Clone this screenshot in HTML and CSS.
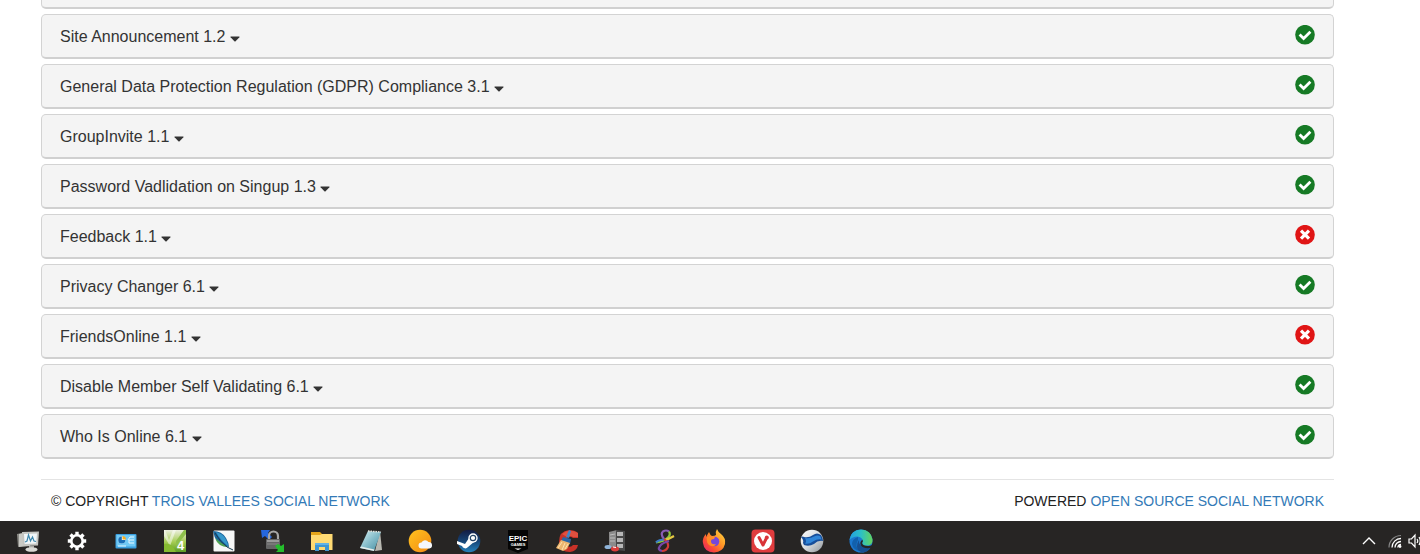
FILE: index.html
```html
<!DOCTYPE html>
<html lang="en">
<head>
    <meta charset="UTF-8">
    <meta name="viewport" content="width=device-width, initial-scale=1.0">
    <title>Components</title>
    <link rel="stylesheet" href="styles.css">
</head>
<body>
    <!-- Shared icons -->
    <svg class="sprite" aria-hidden="true">
        <symbol id="check" viewBox="0 0 20 20">
            <circle cx="10" cy="9.7" r="9.8" fill="#167a25"/>
            <path d="M4.600 9.500l4 4 6.800-6.800" fill="none" stroke="#fff" stroke-width="2.8"/>
        </symbol>
        <symbol id="cross" viewBox="0 0 20 20">
            <circle cx="10" cy="9.7" r="9.8" fill="#e01515"/>
            <path d="M6 5.700l8 8M14 5.700l-8 8" fill="none" stroke="#fff" stroke-width="3.2"/>
        </symbol>
        <symbol id="caret" viewBox="0 0 10 6">
            <path d="M1 .5h8q1 0 .4.8L5.6 5.2q-.6.6-1.2 0L.6 1.3Q0 .5 1 .5z" fill="#333"/>
        </symbol>
    </svg>

    <main class="components">
        <div class="panel panel-cut"></div>
        <div class="panel">
            <button type="button" class="panel-title">Site Announcement 1.2 <svg class="caret"><use href="#caret"/></svg></button>
            <svg class="status" role="img" aria-label="Enabled"><use href="#check"/></svg>
        </div>
        <div class="panel">
            <button type="button" class="panel-title">General Data Protection Regulation (GDPR) Compliance 3.1 <svg class="caret"><use href="#caret"/></svg></button>
            <svg class="status" role="img" aria-label="Enabled"><use href="#check"/></svg>
        </div>
        <div class="panel">
            <button type="button" class="panel-title">GroupInvite 1.1 <svg class="caret"><use href="#caret"/></svg></button>
            <svg class="status" role="img" aria-label="Enabled"><use href="#check"/></svg>
        </div>
        <div class="panel">
            <button type="button" class="panel-title">Password Vadlidation on Singup 1.3 <svg class="caret"><use href="#caret"/></svg></button>
            <svg class="status" role="img" aria-label="Enabled"><use href="#check"/></svg>
        </div>
        <div class="panel">
            <button type="button" class="panel-title">Feedback 1.1 <svg class="caret"><use href="#caret"/></svg></button>
            <svg class="status" role="img" aria-label="Disabled"><use href="#cross"/></svg>
        </div>
        <div class="panel">
            <button type="button" class="panel-title">Privacy Changer 6.1 <svg class="caret"><use href="#caret"/></svg></button>
            <svg class="status" role="img" aria-label="Enabled"><use href="#check"/></svg>
        </div>
        <div class="panel">
            <button type="button" class="panel-title">FriendsOnline 1.1 <svg class="caret"><use href="#caret"/></svg></button>
            <svg class="status" role="img" aria-label="Disabled"><use href="#cross"/></svg>
        </div>
        <div class="panel">
            <button type="button" class="panel-title">Disable Member Self Validating 6.1 <svg class="caret"><use href="#caret"/></svg></button>
            <svg class="status" role="img" aria-label="Enabled"><use href="#check"/></svg>
        </div>
        <div class="panel">
            <button type="button" class="panel-title">Who Is Online 6.1 <svg class="caret"><use href="#caret"/></svg></button>
            <svg class="status" role="img" aria-label="Enabled"><use href="#check"/></svg>
        </div>
    </main>

    <footer class="footer">
        <div>© COPYRIGHT <a href="#">TROIS VALLEES SOCIAL NETWORK</a></div>
        <div>POWERED <a href="#">OPEN SOURCE SOCIAL NETWORK</a></div>
    </footer>

    <div class="taskbar">
        <div class="apps">
            <button type="button" class="app" aria-label="System monitor">
                <svg viewBox="0 0 24 24">
                    <path d="M1 5l10-2v13L2 18z" fill="#8b8b86"/>
                    <path d="M3 5l11-2v14L3 18z" fill="#c9c9c4"/>
                    <path d="M6 3l17-.5-1 14L7 17z" fill="#c4c4c0"/>
                    <path d="M8 5l13-.5-.8 10L8.7 15z" fill="#f1f6f8"/>
                    <path d="M9 13l2-1 1.500-6 2 6 2-4 1.500 4 2 .5" fill="none" stroke="#3d87ad" stroke-width="1.2"/>
                    <path d="M13 17h5v3h-5z" fill="#a9a9a5"/>
                    <ellipse cx="15.5" cy="20.5" rx="6" ry="2.3" fill="#d9d9d5"/>
                </svg>
            </button>
            <button type="button" class="app" aria-label="Settings">
                <svg viewBox="0 0 24 24" fill="none" stroke="#fff">
                    <circle cx="12" cy="12" r="5.7" stroke-width="2.6"/>
                    <path d="M12 2.800v3.200M12 18v3.200M2.800 12H6M18 12h3.200M5.500 5.500l2.300 2.300M16.200 16.200l2.300 2.300M18.500 5.500l-2.300 2.300M7.800 16.200l-2.300 2.300" stroke-width="3.4"/>
                </svg>
            </button>
            <button type="button" class="app" aria-label="Control panel">
                <svg viewBox="0 0 24 24">
                    <rect x="1.5" y="5" width="21" height="14.5" rx="1" fill="#3a9fdf"/>
                    <rect x="2.5" y="6" width="19" height="11.5" fill="#70c9f6"/>
                    <circle cx="7.8" cy="11" r="3.6" fill="#fff"/>
                    <path d="M7.8 11V7.4a3.6 3.6 0 1 0 3.6 3.6z" fill="#1b6fb8"/>
                    <path d="M8.5 10.5V7a3.6 3.6 0 0 1 3.5 3.5z" fill="#f5ad22"/>
                    <path d="M14 11l2-3h4M15 11h5M15 14h5M15 11v3" fill="none" stroke="#e9f8ff"/>
                    <path d="M4 17h8" stroke="#e9f8ff"/>
                </svg>
            </button>
            <button type="button" class="app" aria-label="Editor">
                <svg viewBox="0 0 24 24">
                    <defs>
                        <linearGradient id="g-green" x2="0" y2="1"><stop stop-color="#ecefdf"/><stop offset=".55" stop-color="#a5cc52"/><stop offset="1" stop-color="#5b9c25"/></linearGradient>
                    </defs>
                    <rect x="1" y="1" width="22" height="22" fill="url(#g-green)"/>
                    <path d="M2 1l4 10 4-10h3L7 17 1 7V1z" fill="#fff" opacity=".5"/>
                    <path d="M13 12L21 1h2v4L13 17z" fill="#8fc04c"/>
                    <path d="M1 15q8-2 12 8H1z" fill="#86bb31"/>
                    <text x="14" y="21" class="app-digit" fill="#fff">4</text>
                </svg>
            </button>
            <button type="button" class="app" aria-label="Feather">
                <svg viewBox="0 0 24 24">
                    <rect x="1.5" y="1.5" width="21" height="21" rx="1" fill="#f7f8f7"/>
                    <path d="M1 2q9 0 13 7 3 5 3 9-9-1-12-6Q2 8 1 2z" fill="#1b659c"/>
                    <path d="M4 3q7 2 9 6 3 5 3 8Q8 11 4 3z" fill="#3698cb"/>
                    <path d="M3 9q3 9 13 9Q9 14 3 9z" fill="#51a353"/>
                    <path d="M3 4q5 9 12 14l6 3" fill="none" stroke="#183c50"/>
                </svg>
            </button>
            <button type="button" class="app" aria-label="Secure transfer">
                <svg viewBox="0 0 24 24">
                    <path d="M0 1h9L7 4l4 4-3 3-4-4-3 2z" fill="#2667dc"/>
                    <path d="M8 11V7a4.5 4.5 0 0 1 9 0v4" fill="none" stroke="#a7a7a7" stroke-width="2.2"/>
                    <rect x="5" y="10" width="14" height="10" rx="1" fill="#666"/>
                    <path d="M6 11h12v2H6z" fill="#999"/>
                    <path d="M6 15h12" stroke="#888"/>
                    <path d="M14 17l3-2 3 2 3-2v8h-8l2-2z" fill="#24bd2c"/>
                </svg>
            </button>
            <button type="button" class="app" aria-label="Files">
                <svg viewBox="0 0 24 24">
                    <path d="M1 3h9l2 2h10v3H1z" fill="#e5a51b"/>
                    <path d="M1 6h9l2-1h10.5v16H1z" fill="#ffda73"/>
                    <path d="M5 22v-8h14v8h-4v-4H9v4z" fill="#3f96d2"/>
                    <path d="M5 14h14v2H5z" fill="#62b2e6"/>
                </svg>
            </button>
            <button type="button" class="app" aria-label="Notepad">
                <svg viewBox="0 0 24 24">
                    <defs>
                        <linearGradient id="g-note" x2="1" y2="1"><stop stop-color="#d4f0f3"/><stop offset=".5" stop-color="#86bdca"/><stop offset="1" stop-color="#438ca1"/></linearGradient>
                    </defs>
                    <path d="M21 2l2 19-7 1z" fill="#b8b8b1"/>
                    <path d="M9 2l13 1-7 19L1 19z" fill="url(#g-note)"/>
                    <path d="M1 19l14 3 .5-1.5L2 17.5z" fill="#e3edeb"/>
                    <path d="M9 2l13 1" stroke="#e6e6df" stroke-width="1.5" stroke-dasharray="1.5 1"/>
                </svg>
            </button>
            <button type="button" class="app" aria-label="Weather">
                <svg viewBox="0 0 24 24">
                    <defs>
                        <linearGradient id="g-sun" x2="1" y2="1"><stop stop-color="#ffc31f"/><stop offset="1" stop-color="#f38a13"/></linearGradient>
                    </defs>
                    <circle cx="12" cy="12" r="11.3" fill="url(#g-sun)"/>
                    <path d="M13.500 19.500a3 3 0 0 1 0-6 4 4 0 0 1 7-.5 3.300 3.300 0 0 1 1 6.500z" fill="#f4f7fc"/>
                </svg>
            </button>
            <button type="button" class="app" aria-label="Steam">
                <svg viewBox="0 0 24 24">
                    <defs>
                        <linearGradient id="g-steam" x2="0" y2="1"><stop stop-color="#141b42"/><stop offset=".5" stop-color="#174475"/><stop offset="1" stop-color="#2683bd"/></linearGradient>
                    </defs>
                    <circle cx="12" cy="12" r="11.3" fill="url(#g-steam)"/>
                    <path d="M0 12l8 3 4-6 5 4-6 5a3.400 3.400 0 0 1-6-1L0 15z" fill="#fff"/>
                    <circle cx="16" cy="9" r="4.7" fill="#fff"/>
                    <circle cx="16" cy="9" r="2.7" fill="none" stroke="#254568" stroke-width="1.2"/>
                </svg>
            </button>
            <button type="button" class="app" aria-label="Epic Games">
                <svg viewBox="0 0 24 24">
                    <path d="M2 1h20v19l-10 4-10-4z" fill="#050505"/>
                    <text x="12" y="12" class="app-epic" text-anchor="middle" fill="#fff">EPIC</text>
                    <text x="12" y="17" class="app-games" text-anchor="middle" fill="#fff">GAMES</text>
                    <path d="M8.500 19.500h7L12 21z" fill="#fff"/>
                </svg>
            </button>
            <button type="button" class="app" aria-label="Cleaner">
                <svg viewBox="0 0 24 24">
                    <path d="M23 4v5h-5q-4-3-7 1-2 4 1 7 4 2 6-1h5q-1 6-8 7-10 0-11-10Q4 2 14 1q6 0 9 3z" fill="#c93228"/>
                    <path d="M23 4v4h-5q-3-2-6 0L7 5q7-6 16-1z" fill="#e0503f"/>
                    <path d="M14 1l2 1-2 7-3-1z" fill="#3d85ca"/>
                    <path d="M8 8l8 2-1 5-9-3z" fill="#2865a5"/>
                    <path d="M6 11l9 3-3 6-4 2-7-3z" fill="#edb66e"/>
                    <path d="M7 13l-4 6M10 14l-3 7M13 15l-3 5" stroke="#ffe2ae"/>
                </svg>
            </button>
            <button type="button" class="app" aria-label="Uninstaller">
                <svg viewBox="0 0 24 24">
                    <path d="M5 3l8-2v19l-8-2z" fill="#8b8b8b"/>
                    <path d="M12 1l9 1v20l-9-1z" fill="#494949"/>
                    <path d="M13 3h6v4h-6zM13 9h6v4h-6zM13 15h6v4h-6z" fill="#b7b7b7"/>
                    <path d="M6 6l5-1M6 9h5M6 12h5" stroke="#bdbdbd"/>
                    <ellipse cx="4" cy="18" rx="3.5" ry="2" fill="#8fb4da"/>
                    <ellipse cx="11" cy="20" rx="4" ry="2.4" fill="#dc3d3a"/>
                    <path d="M9 18l3 .5" stroke="#fff"/>
                </svg>
            </button>
            <button type="button" class="app" aria-label="Ribbon">
                <svg viewBox="0 0 24 24" fill="none" stroke-width="2.2">
                    <path d="M11 10Q7 5 10 2.500q3-2 6 0" stroke="#8a5cb4"/>
                    <path d="M16 2.500q2 3-1 6-4 4-12 5" stroke="#8dc63b"/>
                    <path d="M3 13.500q3-3 9-3" stroke="#397cc6"/>
                    <path d="M12 11q4-1 9-4" stroke="#e6c942"/>
                    <path d="M11 10q5 4 4 8-2 4-6 4" stroke="#d13c37"/>
                    <path d="M9 22q-5-1-2-5 2-3 9-5" stroke="#7847a7"/>
                </svg>
            </button>
            <button type="button" class="app" aria-label="Firefox">
                <svg viewBox="0 0 24 24">
                    <defs>
                        <linearGradient id="g-fire" x1="1" x2="0" y2="1"><stop stop-color="#ffe147"/><stop offset=".4" stop-color="#ff9726"/><stop offset=".7" stop-color="#fb4c35"/><stop offset="1" stop-color="#e21b77"/></linearGradient>
                    </defs>
                    <path d="M15 0q1 3 4 5 5 4 4 10-2 8-11 8.500Q2 23 1 14 0 9 4 5v3l3-5q1 3 3 4 3 0 4-1-1-3 1-6z" fill="url(#g-fire)"/>
                    <circle cx="12.5" cy="12.5" r="4.8" fill="#7548d9"/>
                    <path d="M5 8q4-2 8 0l-1 2q-3 0-3 2 0 4 5 3-2 4-7 1-3-3-2-8z" fill="#ff8b28"/>
                </svg>
            </button>
            <button type="button" class="app" aria-label="Vivaldi">
                <svg viewBox="0 0 24 24">
                    <rect x=".5" y=".5" width="23" height="23" rx="4" fill="#e03c3e"/>
                    <circle cx="12" cy="12" r="9" fill="#fff"/>
                    <path d="M8 8.500l4 7.500 3-6" fill="none" stroke="#d93338" stroke-width="3" stroke-linecap="round" stroke-linejoin="round"/>
                    <circle cx="15.8" cy="8.5" r="2" fill="#d93338"/>
                </svg>
            </button>
            <button type="button" class="app" aria-label="Iron browser">
                <svg viewBox="0 0 24 24">
                    <defs>
                        <linearGradient id="g-ball" x2="1" y2="1"><stop stop-color="#fff"/><stop offset=".5" stop-color="#d8dcdf"/><stop offset="1" stop-color="#8e9499"/></linearGradient>
                    </defs>
                    <circle cx="12" cy="12" r="11.3" fill="url(#g-ball)"/>
                    <path d="M1 8q2-1 3 0 5 1 9-2t8 0q2 3 2 6-5-1-9 3-5 3-10 1l-1-2q1-3-2-6z" fill="#174e9a"/>
                    <path d="M5 9q5 1 9-1.500 4-2 6.500 0l1 3q-4-1-8.500 2-4 3-8 2 2-2 0-5.500z" fill="#2f85d8"/>
                </svg>
            </button>
            <button type="button" class="app" aria-label="Edge">
                <svg viewBox="0 0 24 24">
                    <defs>
                        <linearGradient id="g-edge" x2="1"><stop stop-color="#239fe0"/><stop offset=".5" stop-color="#2cc0c5"/><stop offset="1" stop-color="#65d45b"/></linearGradient>
                    </defs>
                    <circle cx="12" cy="12" r="11.5" fill="#1b78cf"/>
                    <path d="M.5 11Q2 .5 12 .5q10 .5 11.500 10 .5 6-6 6-5 0-4-3 1-5-5-6-5 0-8 3.500z" fill="url(#g-edge)"/>
                    <path d="M9 11q-4 7 2 11-7-1-8-7 0-5 6-7z" fill="#1260ac"/>
                    <path d="M10 11q-1 8 11 6.500l1.500-.5q-3 6-8.500 6.500-6-1-6-6 0-4 2-6.500z" fill="#164f91"/>
                    <path d="M13.500 10.500q1 2-.5 3.500 1 3.500 7 3 2-.3 4-1.300l-1 3q-8 1.500-11-2.200-2-3 1.500-6z" fill="#272524"/>
                </svg>
            </button>
        </div>
        <div class="tray">
            <button type="button" class="tray-toggle" aria-label="Show hidden icons">
                <svg class="tray-icon" viewBox="0 0 16 16" fill="none" stroke="#fff" stroke-width="1.4">
                    <path d="M2 11l6-6 6 6"/>
                </svg>
            </button>
            <svg class="tray-icon" viewBox="0 0 16 16" fill="none">
                <path d="M2 14.500A12 12 0 0 1 14 2.500" stroke="#858585" stroke-width="1.2"/>
                <path d="M5 14.500A9 9 0 0 1 14 5.500M8 14.500A6 6 0 0 1 14 8.500" stroke="#fff" stroke-width="1.3"/>
                <path d="M10.800 14.500A3.500 3.500 0 0 1 14 11.300" stroke="#fff" stroke-width="1.2"/>
                <circle cx="13" cy="13.5" r="1.4" fill="#fff"/>
            </svg>
            <svg class="tray-icon" viewBox="0 0 16 16" fill="none" stroke="#fff" stroke-width="1.2">
                <path d="M2 6h2.500l3.500-4v12l-3.500-4H2z"/>
                <path d="M10 6q1.500 2 0 4M12 4q2.500 4 0 8"/>
            </svg>
        </div>
    </div>
</body>
</html>
```
FILE: styles.css
```css
* {
    box-sizing: border-box;
}
body {
    margin: 0;
    font-family: "Liberation Sans", Arial, sans-serif;
    background: #fff;
    color: #333;
    overflow: hidden;
}
button {
    border: none;
    background: none;
    padding: 0;
    font-family: inherit;
    color: inherit;
    cursor: pointer;
}
.sprite {
    display: none;
}
.components {
    display: flex;
    flex-direction: column;
    gap: 5px;
    margin: 0 86px 0 41px;
}
.panel {
    display: flex;
    justify-content: space-between;
    align-items: flex-start;
    padding: 10px 18px 8px;
    background: #f4f4f4;
    border: 1px solid #d3d3d3;
    border-bottom: 2px solid #d0d0d0;
    border-radius: 5px;
}
/* tail of the panel scrolled past the top */
.panel-cut {
    height: 9px;
    padding: 0;
    border-top: none;
    border-radius: 0 0 5px 5px;
}
.panel-title {
    font-size: 16px;
    line-height: 24px;
    text-align: left;
}
.caret {
    width: 10px;
    height: 6px;
}
.status {
    width: 20px;
    height: 20px;
    flex: none;
}
.footer {
    display: flex;
    justify-content: space-between;
    margin: 20px 86px 0 41px;
    padding: 12px 10px 10px;
    border-top: 1px solid #e4e4e4;
    font-size: 14px;
    line-height: 19px;
    color: #222;
}
.footer a {
    color: #337ab7;
    text-decoration: none;
}

/* Taskbar */
.taskbar {
    display: flex;
    justify-content: space-between;
    align-items: flex-start;
    height: 40px;
    padding-top: 8px;
    background: #272524;
}
.apps {
    display: flex;
    padding-left: 3px;
}
.app {
    display: flex;
    justify-content: center;
    width: 49px;
}
.app svg {
    width: 24px;
    height: 24px;
}
.app-digit {
    font-size: 13px;
    font-weight: bold;
}
.app-epic {
    font-size: 8px;
    font-weight: bold;
}
.app-games {
    font-size: 4px;
    font-weight: bold;
}
.tray {
    display: flex;
    gap: 4px;
    width: 59px;
    padding-top: 4px;
    overflow: hidden;
}
.tray-toggle {
    display: flex;
    flex: none;
    padding-right: 6px;
}
.tray-icon {
    flex: none;
    width: 16px;
    height: 16px;
}
```
